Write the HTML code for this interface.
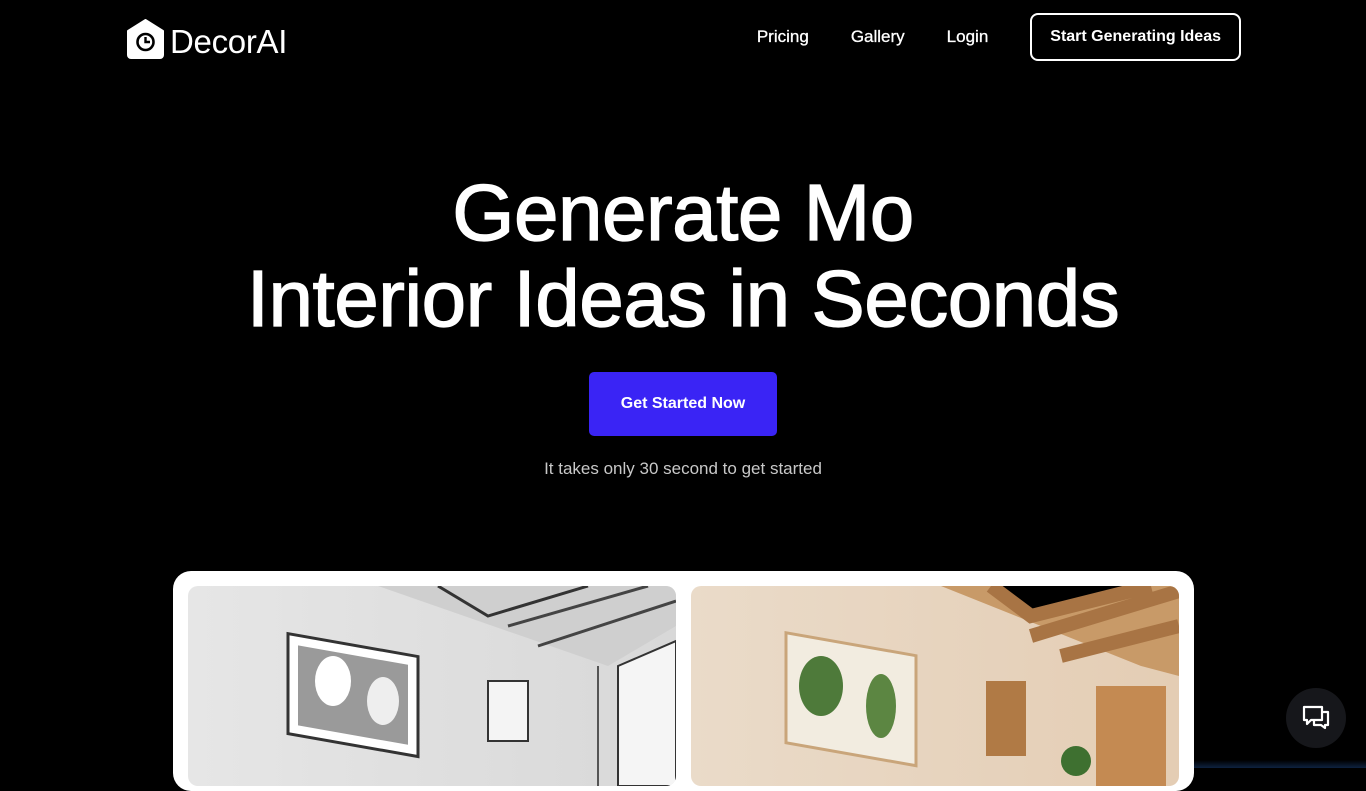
<!DOCTYPE html>
<html><head><meta charset="utf-8"><style>
*{margin:0;padding:0;box-sizing:border-box}
body{width:1366px;height:768px;overflow:hidden;background:#000;font-family:"Liberation Sans",sans-serif;color:#fff;position:relative}
.logo{position:absolute;left:125px;top:17px;display:flex;align-items:center}
.logo span{font-size:33px;margin-left:4px;margin-top:6px;letter-spacing:-0.3px}
nav{position:absolute;top:13px;right:125px;display:flex;align-items:center}
nav a{font-size:17px;color:#fff;text-decoration:none;margin-right:42px;-webkit-text-stroke:0.3px #fff}
nav .btn{margin:0;border:2px solid #fff;border-radius:8px;padding:0 18px;height:48px;line-height:44px;font-weight:bold;font-size:16px;-webkit-text-stroke:0}
h1{position:absolute;top:170px;width:100%;text-align:center;font-size:80px;font-weight:normal;line-height:86px;letter-spacing:-0.5px;-webkit-text-stroke:1.3px #fff}
.cta{position:absolute;left:589px;top:372px;width:188px;height:64px;background:#3a24f5;border-radius:5px;text-align:center;line-height:64px;font-size:16px;font-weight:bold}
.sub{position:absolute;top:459px;width:100%;text-align:center;font-size:17px;color:#c8c8c8}
.card{position:absolute;left:173px;top:571px;width:1021px;height:220px;background:#fff;border-radius:18px}
.img{position:absolute;top:586px;width:488px;height:200px;border-radius:10px;overflow:hidden}
.chat{position:absolute;left:1286px;top:688px;width:60px;height:60px;border-radius:50%;background:#16171b;display:flex;align-items:center;justify-content:center}
.glow{position:absolute;left:1194px;top:760px;width:172px;height:8px;background:linear-gradient(#000,#0e2240)}
</style></head><body>
<div class="logo">
<svg width="41" height="40" viewBox="0 0 41 40"><path d="M3 12 L20.5 1 L38 12 V36 a3 3 0 0 1 -3 3 H6 a3 3 0 0 1 -3 -3 Z" fill="#fff" stroke="#fff" stroke-width="2" stroke-linejoin="round"/><circle cx="20.5" cy="23" r="8" fill="none" stroke="#000" stroke-width="2.6"/><path d="M20.5 18 V23 H25" fill="none" stroke="#000" stroke-width="2.4"/></svg>
<span>DecorAI</span></div>
<nav><a>Pricing</a><a>Gallery</a><a>Login</a><a class="btn">Start Generating Ideas</a></nav>
<h1>Generate Mo<br>Interior Ideas in Seconds</h1>
<div class="cta">Get Started Now</div>
<div class="sub">It takes only 30 second to get started</div>
<div class="card"></div>
<div class="img" style="left:188px;background:linear-gradient(90deg,#e6e6e6,#d8d8d8)">
<svg width="488" height="200"><path d="M190 0 L488 0 L488 40 L420 80 Z" fill="#cfcfcf"/><path d="M250 0 L300 30 L400 0" fill="none" stroke="#333" stroke-width="3"/><path d="M320 40 L460 0 M350 60 L488 15" stroke="#444" stroke-width="3"/><path d="M410 80 V200" stroke="#555" stroke-width="2"/><rect x="100" y="30" width="130" height="100" fill="#fff" stroke="#333" stroke-width="3" transform="skewY(10)"/><rect x="110" y="40" width="110" height="80" fill="#9a9a9a" transform="skewY(10)"/><ellipse cx="145" cy="95" rx="18" ry="25" fill="#fff"/><ellipse cx="195" cy="115" rx="16" ry="24" fill="#eee"/><rect x="300" y="95" width="40" height="60" fill="#f4f4f4" stroke="#333" stroke-width="2"/><path d="M430 80 L488 55 V200 H430 Z" fill="#f5f5f5" stroke="#333" stroke-width="2"/></svg></div>
<div class="img" style="left:691px;background:linear-gradient(90deg,#eadbc9,#e4cdb4)">
<svg width="488" height="200"><path d="M250 0 L488 0 L488 90 L450 80 Z" fill="#c89a68"/><path d="M300 0 L340 30 L460 0 M340 50 L488 5 M370 70 L488 40" stroke="#a87444" stroke-width="14"/><rect x="95" y="30" width="130" height="110" fill="#f2ece0" stroke="#c9a57a" stroke-width="3" transform="skewY(10)"/><ellipse cx="130" cy="100" rx="22" ry="30" fill="#4e7a3a"/><ellipse cx="190" cy="120" rx="15" ry="32" fill="#5c8642"/><rect x="295" y="95" width="40" height="75" fill="#b07a45"/><rect x="405" y="100" width="70" height="100" fill="#c48a52"/><circle cx="385" cy="175" r="15" fill="#3e7030"/></svg></div>
<div class="chat"><svg width="28" height="26" viewBox="0 0 28 26" fill="none" stroke="#fff" stroke-width="2.2" stroke-linejoin="round"><path d="M2 2 H20 V15 H9 L5 19 V15 H2 Z"/><path d="M20 7 H26 V20 H23 V23 L19 20 H12 V15"/></svg></div>
<div class="glow"></div>
</body></html>
